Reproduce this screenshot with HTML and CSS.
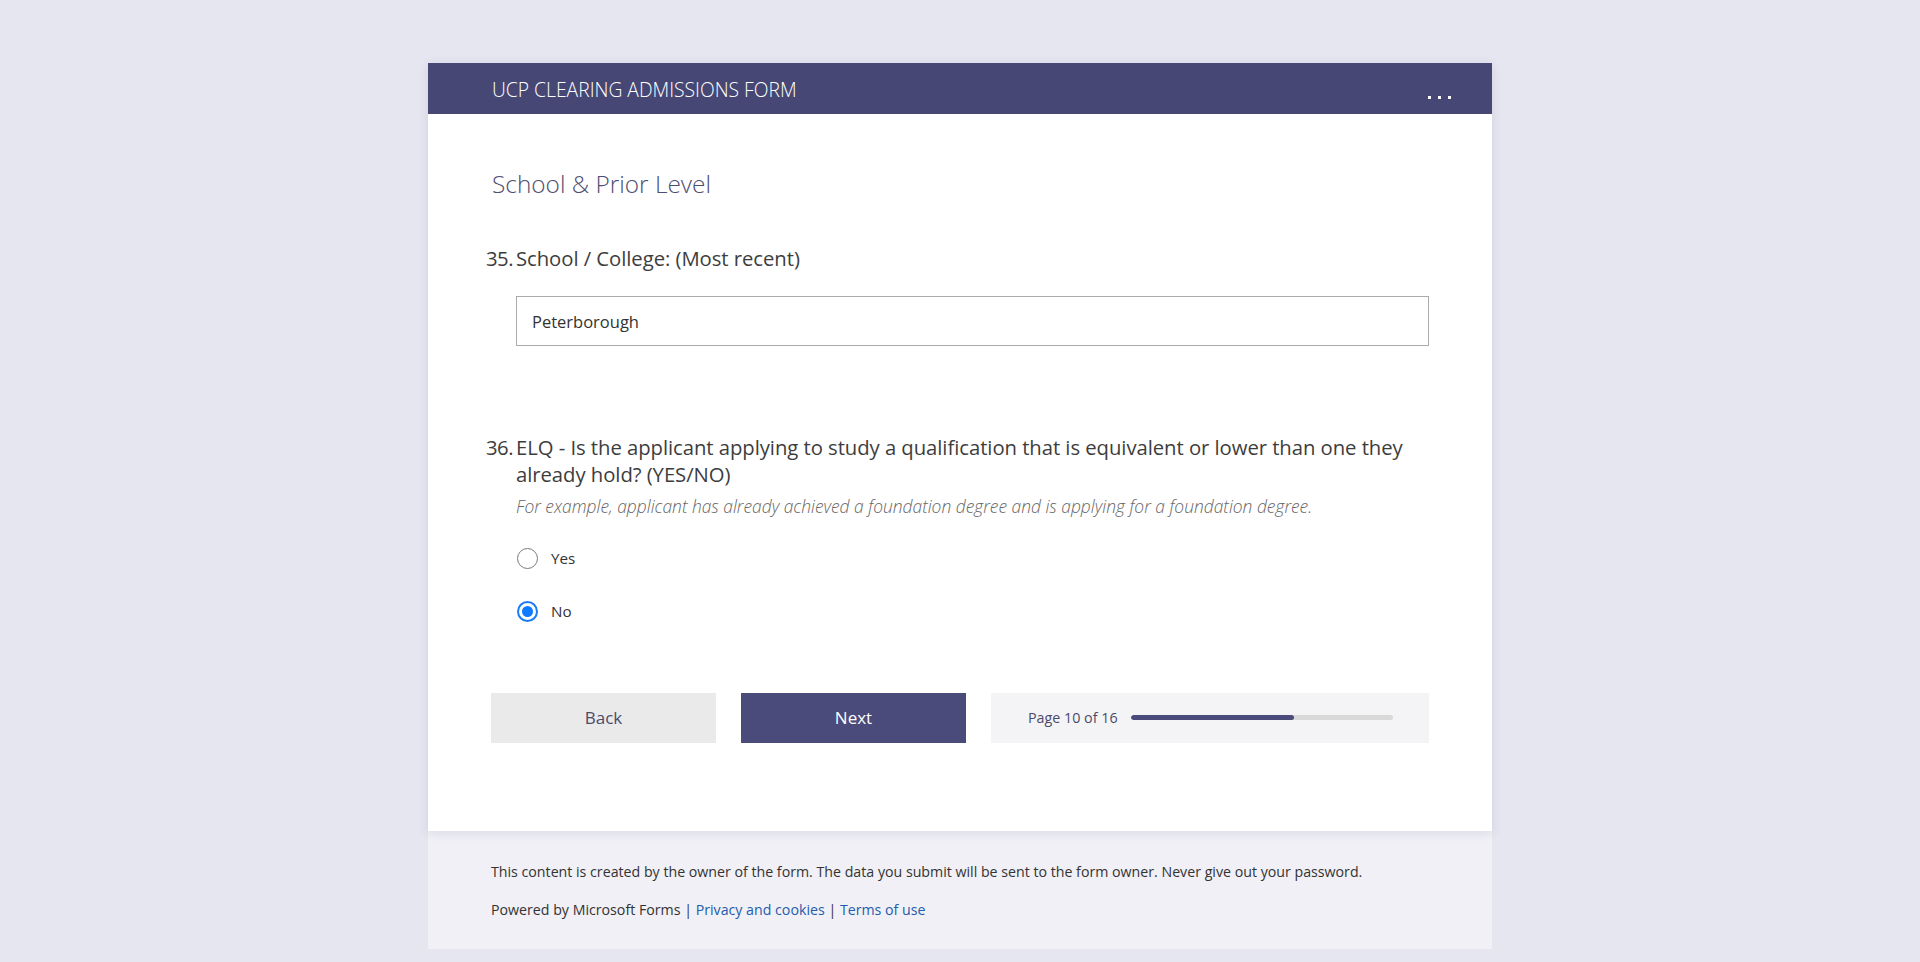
FILE: index.html
```html
<!DOCTYPE html>
<html lang="en">
<head>
<meta charset="utf-8">
<title>UCP Clearing Admissions Form</title>
<link rel="stylesheet" href="styles.css">
</head>
<body>
<div class="page">
  <div class="card">
    <div class="header">
      <div class="header-title">UCP CLEARING ADMISSIONS FORM</div>
      <div class="more"><span></span><span></span><span></span></div>
    </div>
    <div class="body">
      <div class="section-title">School &amp; Prior Level</div>

      <div class="question q35">
        <div class="qnum">35.</div>
        <div class="qmain">
          <div class="qtitle">School / College: (Most recent)</div>
          <div class="input">Peterborough</div>
        </div>
      </div>

      <div class="question q36">
        <div class="qnum">36.</div>
        <div class="qmain">
          <div class="qtitle">ELQ - Is the applicant applying to study a qualification that is equivalent or lower than one they already hold? (YES/NO)</div>
          <div class="qsub">For example, applicant has already achieved a foundation degree and is applying for a foundation degree.</div>
          <div class="options">
            <div class="option"><span class="radio"></span><span class="label">Yes</span></div>
            <div class="option"><span class="radio checked"></span><span class="label">No</span></div>
          </div>
        </div>
      </div>

      <div class="nav">
        <div class="btn back">Back</div>
        <div class="btn next">Next</div>
        <div class="progress">
          <span class="ptext">Page 10 of 16</span>
          <div class="track"><div class="fill" style="width:62.5%"></div></div>
        </div>
      </div>
    </div>
  </div>
  <div class="footer">
    <div class="fline">This content is created by the owner of the form. The data you submit will be sent to the form owner. Never give out your password.</div>
    <div class="fline">Powered by Microsoft Forms | <a href="#">Privacy and cookies</a> | <a href="#">Terms of use</a></div>
  </div>
</div>
</body>
</html>
```

FILE: styles.css
```css
html, body {
  margin: 0;
  padding: 0;
}
body {
  background: #e6e6f1;
  font-family: "Open Sans", "Noto Sans", "Liberation Sans", sans-serif;
  color: #333333;
  height: 962px;
  overflow: hidden;
}
.page {
  padding-top: 63px;
  display: flex;
  flex-direction: column;
  align-items: center;
}
.card {
  width: 1064px;
  background: #ffffff;
  box-shadow: 0 2px 10px rgba(60, 60, 100, 0.12);
  position: relative;
  z-index: 1;
}
.header {
  height: 51px;
  background: #464775;
  display: flex;
  align-items: center;
  justify-content: space-between;
  padding: 0 41px 0 64px;
}
.header-title {
  color: #ffffff;
  font-size: 19.3px;
  font-weight: 300;
  padding-top: 1px;
}
.more {
  display: flex;
  gap: 7px;
  padding-top: 18px;
}
.more span {
  width: 3px;
  height: 3px;
  background: #ffffff;
}
.body {
  padding: 54px 63px 88px 58px;
}
.section-title {
  margin-left: 6px;
  font-size: 24.4px;
  font-weight: 300;
  line-height: 32px;
  color: #4e4e70;
}
.question {
  display: flex;
}
.qnum {
  width: 30px;
  flex: none;
  font-size: 20.3px;
  line-height: 27px;
  color: #3d3d3d;
  letter-spacing: -0.5px;
}
.qmain {
  flex: 1;
}
.qtitle {
  font-size: 20.3px;
  line-height: 27px;
  color: #3d3d3d;
  letter-spacing: -0.05px;
}
.q35 {
  margin-top: 45px;
}
.input {
  margin-top: 24px;
  height: 48px;
  border: 1px solid #ababab;
  padding-left: 15px;
  display: flex;
  align-items: center;
  font-size: 16.5px;
  color: #333333;
}
.q36 {
  margin-top: 88px;
}
.qsub {
  margin-top: 7px;
  font-size: 17.4px;
  font-weight: 300;
  font-style: italic;
  color: #666666;
  line-height: 22px;
}
.options {
  margin-top: 30px;
  display: flex;
  flex-direction: column;
  gap: 31px;
}
.option {
  display: flex;
  align-items: center;
  height: 22px;
}
.radio {
  width: 21px;
  height: 21px;
  border: 1px solid #7a7a7a;
  border-radius: 50%;
  margin-left: 1px;
  box-sizing: border-box;
  position: relative;
  flex: none;
}
.radio.checked {
  border: 2px solid #1a7cf5;
}
.radio.checked::after {
  content: "";
  position: absolute;
  left: 3px;
  top: 3px;
  width: 11px;
  height: 11px;
  border-radius: 50%;
  background: #0f7aff;
}
.label {
  margin-left: 13px;
  font-size: 15.2px;
  color: #333333;
}
.nav {
  margin-top: 70.6px;
  margin-left: 5px;
  display: flex;
  gap: 25px;
  height: 50px;
}
.btn {
  width: 225px;
  display: flex;
  align-items: center;
  justify-content: center;
  font-size: 17px;
}
.back {
  background: #eaeaea;
  color: #4b4b6b;
}
.next {
  background: #4b4b7b;
  color: #ffffff;
  font-weight: 500;
}
.progress {
  flex: 1;
  background: #f4f4f7;
  display: flex;
  align-items: center;
  padding-left: 37px;
}
.ptext {
  font-size: 14.3px;
  color: #4b4b6b;
}
.track {
  margin-left: 13px;
  width: 262px;
  height: 5px;
  border-radius: 3px;
  background: #d9d9d9;
  overflow: hidden;
}
.fill {
  height: 100%;
  background: #4b4b7b;
  border-radius: 3px;
}
.footer {
  width: 1064px;
  box-sizing: border-box;
  height: 118px;
  background: #f0f0f6;
  padding: 31px 63px 0 63px;
  font-size: 14.2px;
  line-height: 20px;
  color: #333333;
}
.fline + .fline {
  margin-top: 18px;
}
.footer a {
  color: #1f5cad;
  text-decoration: none;
}
```
